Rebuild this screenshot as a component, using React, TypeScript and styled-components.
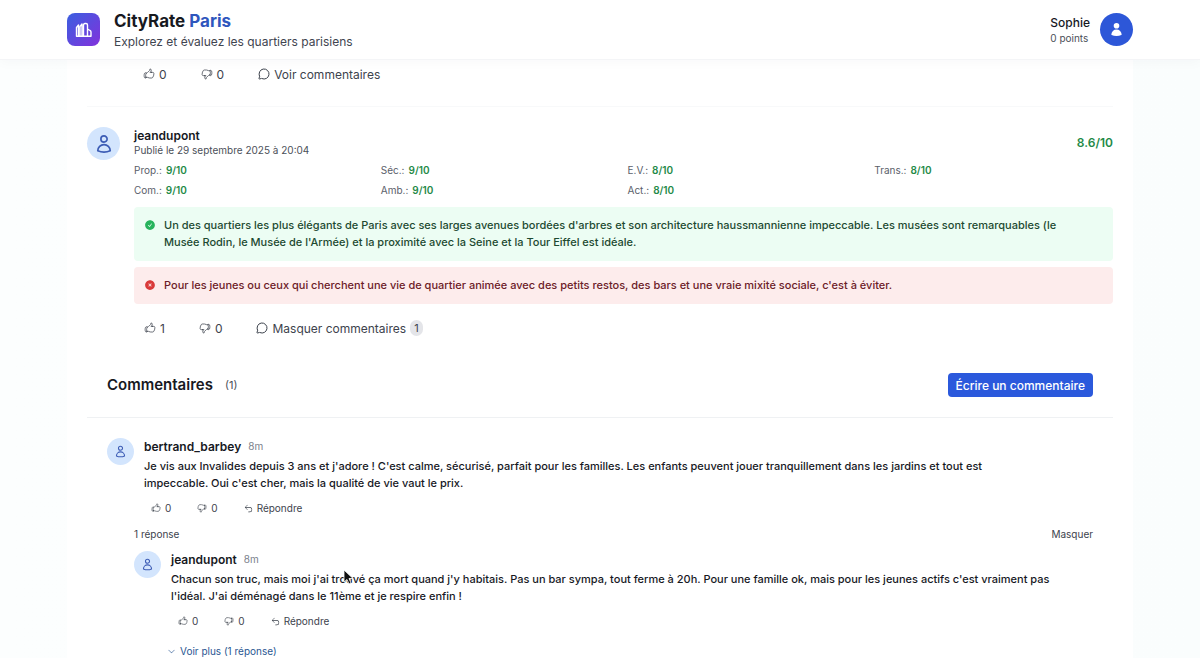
import React from "react";
import styled, { createGlobalStyle } from "styled-components";
import { MessageCircle } from "lucide-react";
import {
  HiArrowUturnLeft,
  HiCheckCircle,
  HiChevronDown,
  HiOutlineHandThumbDown,
  HiOutlineHandThumbUp,
  HiOutlineUser,
  HiUser,
  HiXCircle,
} from "react-icons/hi2";

const Global = createGlobalStyle`
  *, *::before, *::after { box-sizing: border-box; }
  html { scrollbar-width: none; }
  body {
    margin: 0;
    background: linear-gradient(90deg, #fcfefe, #fafdfd);
    color: #17191f;
    font-family: Inter, "Liberation Sans", sans-serif;
    font-size: 12px;
    line-height: 17px;
  }
  h1, h2, h3, p, dl, dd, dt { margin: 0; padding: 0; }
  button { font: inherit; border: 0; background: none; padding: 0; cursor: pointer; color: inherit; }
  svg { display: block; flex: none; }
`;

const Page = styled.div`
  min-height: 100vh;
  display: flex;
  flex-direction: column;
`;

const Header = styled.header`
  position: sticky;
  top: 0;
  z-index: 2;
  background: #fff;
  border-bottom: 1px solid #f4f5f7;
  box-shadow: 0 2px 12px rgba(20, 40, 60, 0.03);
`;

const HeaderInner = styled.div`
  max-width: 1066px;
  margin: 0 auto;
  height: 59px;
  display: flex;
  align-items: center;
  gap: 14px;
`;

const Logo = styled.div`
  width: 33px;
  height: 33px;
  border-radius: 8px;
  display: grid;
  place-items: center;
  background: linear-gradient(135deg, #3a5fe0, #8232dc);
`;

const Brand = styled.div`
  flex: 1;
`;

const Title = styled.h1`
  font-size: 17px;
  line-height: 23px;
  font-weight: 700;
  span { color: #2f56bd; }
`;

const Tagline = styled.p`
  color: #3f4550;
`;

const AccountName = styled.p`
  line-height: 16px;
  font-weight: 500;
`;

const Points = styled.p`
  font-size: 10px;
  line-height: 14px;
  color: #4b5059;
`;

const ProfileButton = styled.button`
  width: 33px;
  height: 33px;
  margin-left: -4px;
  border-radius: 50%;
  display: grid;
  place-items: center;
  background: #2d57d8;
  color: #fff;
`;

const Card = styled.main`
  flex: 1;
  width: 100%;
  max-width: 1066px;
  margin: 0 auto;
  padding: 4px 20px 0;
  background: #fff;
`;

const Avatar = styled.div<{ $small?: boolean }>`
  flex: none;
  width: ${(p) => (p.$small ? 27 : 33)}px;
  height: ${(p) => (p.$small ? 27 : 33)}px;
  border-radius: 50%;
  display: grid;
  place-items: center;
  background: #d3e5fd;
  color: #3c5cb5;
  svg { stroke-width: 2; }
`;

const Actions = styled.div<{ $small?: boolean }>`
  display: flex;
  align-items: center;
  gap: ${(p) => (p.$small ? 26 : 34)}px;
  height: 20px;
  padding-left: ${(p) => (p.$small ? 7 : 10)}px;
  color: #3d434d;
  font-size: ${(p) => (p.$small ? 10 : 12)}px;
`;

const Action = styled.button`
  display: flex;
  align-items: center;
  gap: 4px;
`;

const Count = styled.span`
  padding: 0 4px;
  border-radius: 8px;
  background: #e4e5e9;
  font-size: 11px;
  line-height: 16px;
`;

const PreviousReview = styled.section`
  padding: 0 0 22px 46px;
  border-bottom: 1px solid #f8f9fa;
`;

const Review = styled.article`
  display: flex;
  gap: 14px;
  padding-top: 20px;
`;

const ReviewBody = styled.div`
  flex: 1;
  min-width: 0;
`;

const ReviewHead = styled.div`
  display: flex;
  align-items: center;
  justify-content: space-between;
`;

const Author = styled.h3`
  font-size: 12px;
  line-height: 17px;
  font-weight: 600;
`;

const PublishedAt = styled.p`
  font-size: 10px;
  line-height: 13px;
  color: #4b5059;
`;

const Score = styled.p`
  color: #1f8a48;
  font-weight: 600;
`;

const Ratings = styled.dl`
  display: grid;
  grid-template-columns: repeat(4, 1fr);
  gap: 6px 8px;
  margin-top: 6px;
  font-size: 10px;
  line-height: 14px;
`;

const Rating = styled.div`
  display: flex;
  gap: 4px;
  dt { color: #5a606a; }
  dd { color: #1f8a48; font-weight: 600; }
`;

const Opinion = styled.div<{ $negative?: boolean }>`
  display: flex;
  gap: 8px;
  margin-top: ${(p) => (p.$negative ? 6 : 10)}px;
  padding: 10px;
  border-radius: 4px;
  font-size: 11px;
  font-weight: 500;
  white-space: pre-line;
  background: ${(p) => (p.$negative ? "#fdecec" : "#ecfdf3")};
  color: ${(p) => (p.$negative ? "#6c2028" : "#1d4a31")};
  svg { margin-top: 2px; color: ${(p) => (p.$negative ? "#d93a3a" : "#27b35c")}; }
`;

const ReviewActions = styled.div`
  margin-top: 14px;
`;

const CommentsHead = styled.div`
  display: flex;
  align-items: center;
  margin-top: 35px;
  padding: 0 20px 20px;
  border-bottom: 1px solid #eff1f3;
`;

const CommentsTitle = styled.h2`
  font-size: 15px;
  line-height: 24px;
  font-weight: 600;
`;

const CommentsTotal = styled.span`
  flex: 1;
  margin-left: 12px;
  font-size: 11px;
  color: #4b5059;
`;

const WriteButton = styled.button`
  height: 24px;
  padding: 0 8px;
  border-radius: 4px;
  background: #2b59dc;
  color: #fff;
  font-weight: 500;
`;

const Comments = styled.div`
  padding: 20px 20px 0;
`;

const CommentRow = styled.article`
  display: flex;
  gap: 10px;
`;

const CommentBody = styled.div`
  flex: 1;
  min-width: 0;
`;

const CommentHead = styled.div`
  display: flex;
  gap: 7px;
  margin-bottom: 3px;
`;

const Age = styled.span`
  font-size: 10px;
  color: #7b818b;
`;

const CommentText = styled.p`
  margin-bottom: 6px;
  font-size: 11px;
  font-weight: 500;
  white-space: pre-line;
`;

const Replies = styled.section`
  padding-left: 27px;
`;

const RepliesHead = styled.div`
  display: flex;
  justify-content: space-between;
  margin: 8px 0;
  font-size: 10px;
  color: #3d434d;
`;

const MoreButton = styled.button`
  display: flex;
  align-items: center;
  gap: 4px;
  margin: 12px 0 0 33px;
  font-size: 10px;
  color: #2a5792;
`;

const Pointer = styled.svg`
  position: fixed;
  left: 343px;
  top: 569px;
  z-index: 3;
  pointer-events: none;
`;

const ratings = [
  ["Prop.:", "9/10"],
  ["Séc.:", "9/10"],
  ["E.V.:", "8/10"],
  ["Trans.:", "8/10"],
  ["Com.:", "9/10"],
  ["Amb.:", "9/10"],
  ["Act.:", "8/10"],
];

const positive =
  "Un des quartiers les plus élégants de Paris avec ses larges avenues bordées d'arbres et son architecture haussmannienne impeccable. Les musées sont remarquables (le\nMusée Rodin, le Musée de l'Armée) et la proximité avec la Seine et la Tour Eiffel est idéale.";

const negative =
  "Pour les jeunes ou ceux qui cherchent une vie de quartier animée avec des petits restos, des bars et une vraie mixité sociale, c'est à éviter.";

function ReviewVotes({ likes, label, count }: { likes: number; label: string; count?: number }) {
  return (
    <Actions>
      <Action aria-label="J'aime"><HiOutlineHandThumbUp size={12} />{likes}</Action>
      <Action aria-label="Je n'aime pas"><HiOutlineHandThumbDown size={12} />0</Action>
      <Action>
        <MessageCircle size={12} />
        {label}
        {count !== undefined && <Count>{count}</Count>}
      </Action>
    </Actions>
  );
}

function Comment({ author, text }: { author: string; text: string }) {
  return (
    <CommentRow>
      <Avatar $small><HiOutlineUser size={13} /></Avatar>
      <CommentBody>
        <CommentHead><Author>{author}</Author><Age>8m</Age></CommentHead>
        <CommentText>{text}</CommentText>
        <Actions $small>
          <Action aria-label="J'aime"><HiOutlineHandThumbUp size={10} />0</Action>
          <Action aria-label="Je n'aime pas"><HiOutlineHandThumbDown size={10} />0</Action>
          <Action><HiArrowUturnLeft size={9} />Répondre</Action>
        </Actions>
      </CommentBody>
    </CommentRow>
  );
}

export default function App() {
  return (
    <Page>
      <Global />
      <Header>
        <HeaderInner>
          <Logo>
            <svg width="18" height="16" viewBox="0 0 18 16" fill="none" stroke="#fff" strokeWidth="1.4" strokeLinejoin="round" strokeLinecap="round">
              <path d="M1.500 14V5.500L3.500 3v11M5 14V4.500L7 2v12M8.500 14V3q0-1.500 1.500-1.500h1q1.500 0 1.500 1.500v11M12.500 7l2.500 1.500q1 .5 1 1.500v4M1.500 14.200H16" />
            </svg>
          </Logo>
          <Brand>
            <Title>CityRate <span>Paris</span></Title>
            <Tagline>Explorez et évaluez les quartiers parisiens</Tagline>
          </Brand>
          <div>
            <AccountName>Sophie</AccountName>
            <Points>0 points</Points>
          </div>
          <ProfileButton aria-label="Profil"><HiUser size={15} /></ProfileButton>
        </HeaderInner>
      </Header>
      <Card>
        <PreviousReview>
          <ReviewVotes likes={0} label="Voir commentaires" />
        </PreviousReview>
        <Review>
          <Avatar><HiOutlineUser size={20} /></Avatar>
          <ReviewBody>
            <ReviewHead>
              <div>
                <Author>jeandupont</Author>
                <PublishedAt>Publié le 29 septembre 2025 à 20:04</PublishedAt>
              </div>
              <Score>8.6/10</Score>
            </ReviewHead>
            <Ratings>
              {ratings.map(([name, value]) => (
                <Rating key={name}><dt>{name}</dt><dd>{value}</dd></Rating>
              ))}
            </Ratings>
            <Opinion>
              <HiCheckCircle size={12} />
              <p>{positive}</p>
            </Opinion>
            <Opinion $negative>
              <HiXCircle size={12} />
              <p>{negative}</p>
            </Opinion>
            <ReviewActions>
              <ReviewVotes likes={1} label="Masquer commentaires" count={1} />
            </ReviewActions>
          </ReviewBody>
        </Review>
        <CommentsHead>
          <CommentsTitle>Commentaires</CommentsTitle>
          <CommentsTotal>(1)</CommentsTotal>
          <WriteButton>Écrire un commentaire</WriteButton>
        </CommentsHead>
        <Comments>
          <Comment
            author="bertrand_barbey"
            text={"Je vis aux Invalides depuis 3 ans et j'adore ! C'est calme, sécurisé, parfait pour les familles. Les enfants peuvent jouer tranquillement dans les jardins et tout est\nimpeccable. Oui c'est cher, mais la qualité de vie vaut le prix."}
          />
          <Replies>
            <RepliesHead><span>1 réponse</span><button>Masquer</button></RepliesHead>
            <Comment
              author="jeandupont"
              text={"Chacun son truc, mais moi j'ai trouvé ça mort quand j'y habitais. Pas un bar sympa, tout ferme à 20h. Pour une famille ok, mais pour les jeunes actifs c'est vraiment pas\nl'idéal. J'ai déménagé dans le 11ème et je respire enfin !"}
            />
            <MoreButton><HiChevronDown size={9} />Voir plus (1 réponse)</MoreButton>
          </Replies>
        </Comments>
      </Card>
      <Pointer width="12" height="17" viewBox="0 0 12 17" aria-hidden="true">
        <path d="M1 1v12l3-2.500 2 4.500 2-1-2-4.500h4z" fill="#111" stroke="#fff" strokeWidth=".8" />
      </Pointer>
    </Page>
  );
}
